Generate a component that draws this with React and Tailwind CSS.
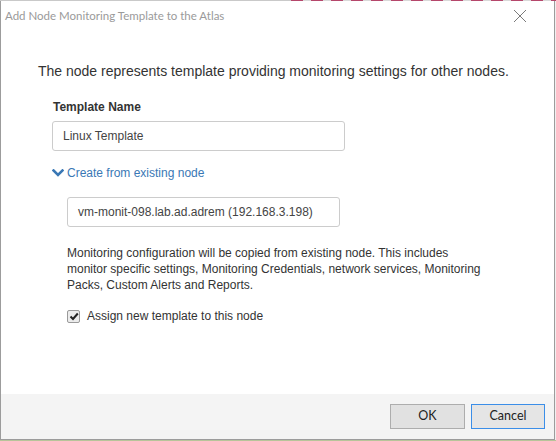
import React from "react";

const uiFont = { fontFamily: 'Lato, "Noto Sans", sans-serif' };
const bodyFont = { fontFamily: '"Liberation Sans", Arial, sans-serif' };

function CloseIcon() {
    return (
        <svg width="14" height="14" viewBox="0 0 14 14" className="text-[#7a7a7a]">
            <path d="M1 1 L13 13 M13 1 L1 13" stroke="currentColor" strokeWidth="1" fill="none" />
        </svg>
    );
}

function Chevron() {
    return (
        <svg width="12" height="8" viewBox="0 0 12 8" className="text-[#3a78b5]">
            <path d="M1.5 1.5 L6 6 L10.5 1.5" stroke="currentColor" strokeWidth="2.6" fill="none" strokeLinecap="square" />
        </svg>
    );
}

function Checkbox() {
    return (
        <div className="w-[13px] h-[13px] border border-[#9a9a9a] rounded-[2px] bg-[#ececec] flex items-center justify-center">
            <svg width="10" height="9" viewBox="0 0 10 9">
                <path d="M1.5 4.5 L4 7 L8.8 1.5" stroke="#222" strokeWidth="2" fill="none" />
            </svg>
        </div>
    );
}

function Field({ value, className }) {
    return (
        <div
            className={`h-[30px] border border-[#cccccc] rounded-[3px] flex items-center pl-[10px] text-[12px] text-[#444] ${className}`}
        >
            {value}
        </div>
    );
}

export default function App() {
    return (
        <div className="w-[556px] h-[441px] flex flex-col bg-[#f0f0f0]" style={bodyFont}>
            {/* desktop edge peeking above the dialog */}
            <div className="h-px bg-[#c9c9c9] flex">
                <div className="w-[291px]" />
                <div className="flex-1 bg-[repeating-linear-gradient(90deg,#b5476b_0px,#b5476b_12px,#d9d9d9_12px,#d9d9d9_20px)]" />
            </div>

            <div className="flex-1 flex flex-col w-[555px] bg-white border-l border-r border-b border-[#9c9c9c]">
                <div className="h-[29px] flex items-center justify-between pl-[4px] pr-[27px]">
                    <span className="text-[11.5px] text-[#9a9a9a]" style={uiFont}>
                        Add Node Monitoring Template to the Atlas
                    </span>
                    <CloseIcon />
                </div>

                <div className="flex-1 flex flex-col pl-[37px] pt-[33px] text-[#333]">
                    <p className="text-[14px] leading-[16px]">
                        The node represents template providing monitoring settings for other nodes.
                    </p>

                    <div className="pl-[14px] mt-[21px]">
                        <p className="text-[12px] font-bold leading-[14px] pl-px">Template Name</p>
                        <Field value="Linux Template" className="w-[293px] mt-[7px]" />

                        <div className="flex items-center gap-[3px] mt-[15px] text-[12px] leading-[14px] text-[#3a78b5]">
                            <Chevron />
                            <span>Create from existing node</span>
                        </div>

                        <div className="pl-[15px]">
                            <Field
                                value="vm-monit-098.lab.ad.adrem (192.168.3.198)"
                                className="w-[273px] mt-[17px]"
                            />

                            <p className="text-[12px] leading-[16px] mt-[18px] w-[420px]">
                                Monitoring configuration will be copied from existing node. This includes
                                monitor specific settings, Monitoring Credentials, network services, Monitoring
                                Packs, Custom Alerts and Reports.
                            </p>

                            <div className="flex items-center gap-[7px] mt-[14px] text-[12px]">
                                <Checkbox />
                                <span>Assign new template to this node</span>
                            </div>
                        </div>
                    </div>
                </div>

                <div className="h-[45px] bg-[#f4f4f4] flex items-center justify-end gap-[6px] pr-[9px]" style={uiFont}>
                    <button className="w-[75px] h-[25px] border border-[#adadad] bg-[#e1e1e1] text-[12.5px] text-[#222]">
                        OK
                    </button>
                    <button className="w-[74px] h-[25px] border border-[#3b8ee8] bg-[#e5e5e5] text-[12.5px] text-[#222]">
                        Cancel
                    </button>
                </div>
            </div>

            <div className="h-px bg-[#b8c49a]" />
        </div>
    );
}
